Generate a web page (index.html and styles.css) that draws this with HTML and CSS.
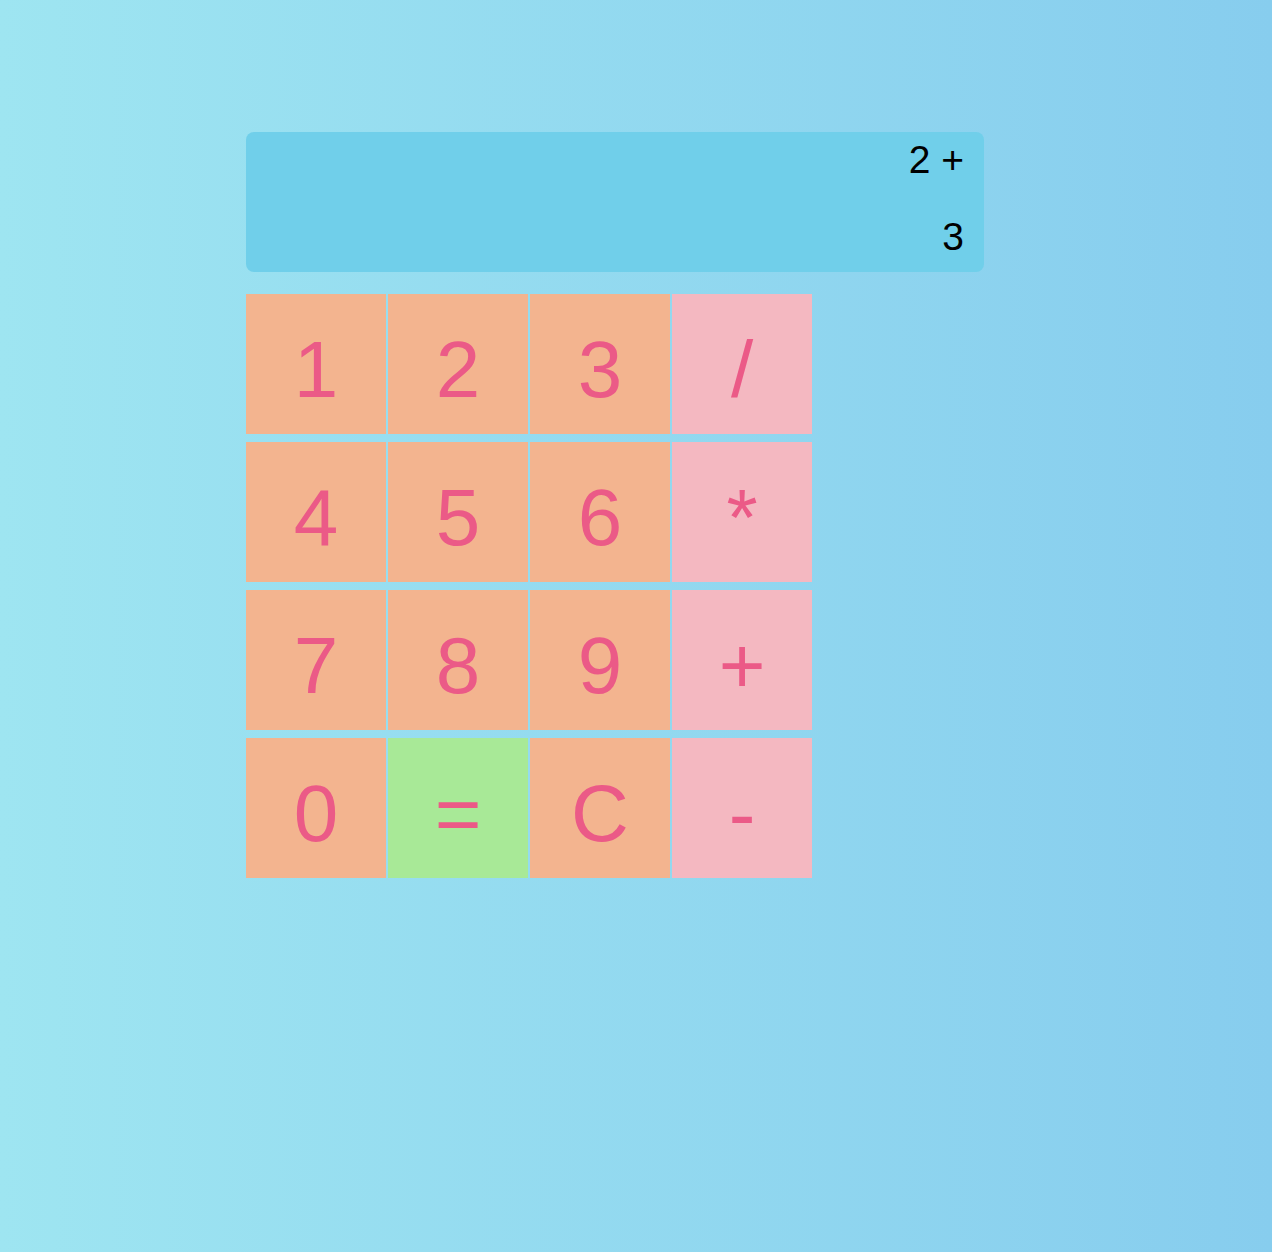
FILE: index.html
```html
<!DOCTYPE html>
<html lang="en">
<head>
<meta charset="utf-8">
<title>Calculator</title>
<link rel="stylesheet" href="styles.css">
</head>
<body>
<main class="calculator">
  <div class="display">
    <div class="previous">2 +</div>
    <div class="current">3</div>
  </div>
  <div class="keys">
    <button class="key num">1</button>
    <button class="key num">2</button>
    <button class="key num">3</button>
    <button class="key op">/</button>
    <button class="key num">4</button>
    <button class="key num">5</button>
    <button class="key num">6</button>
    <button class="key op">*</button>
    <button class="key num">7</button>
    <button class="key num">8</button>
    <button class="key num">9</button>
    <button class="key op">+</button>
    <button class="key num">0</button>
    <button class="key equals">=</button>
    <button class="key num">C</button>
    <button class="key op">-</button>
  </div>
</main>
</body>
</html>
```
FILE: styles.css
```css
html, body {
  margin: 0;
  padding: 0;
}
body {
  min-height: 1252px;
  background: linear-gradient(to right, #9ee5f1, #87cdee);
  font-family: "Liberation Sans", Arial, Helvetica, sans-serif;
}
.calculator {
  padding: 132px 0 0 246px;
  width: 738px;
}
.display {
  box-sizing: border-box;
  height: 140px;
  background: #70cfea;
  border-radius: 8px;
  padding: 8px 20px 15px 20px;
  display: flex;
  flex-direction: column;
  justify-content: space-between;
  align-items: flex-end;
  color: #000;
  font-size: 39px;
  line-height: 40px;
}
.keys {
  margin-top: 22px;
  display: grid;
  grid-template-columns: repeat(4, 140px);
  grid-auto-rows: 140px;
  column-gap: 2px;
  row-gap: 8px;
}
.key {
  border: none;
  margin: 0;
  padding: 11px 0 0 0;
  display: flex;
  align-items: center;
  justify-content: center;
  font-family: "Liberation Sans", Arial, Helvetica, sans-serif;
  font-size: 80px;
  line-height: 80px;
  color: #eb5a87;
  cursor: pointer;
}
.num {
  background: #f3b48f;
}
.op {
  background: #f4b8c1;
}
.equals {
  background: #a8e997;
}
```
